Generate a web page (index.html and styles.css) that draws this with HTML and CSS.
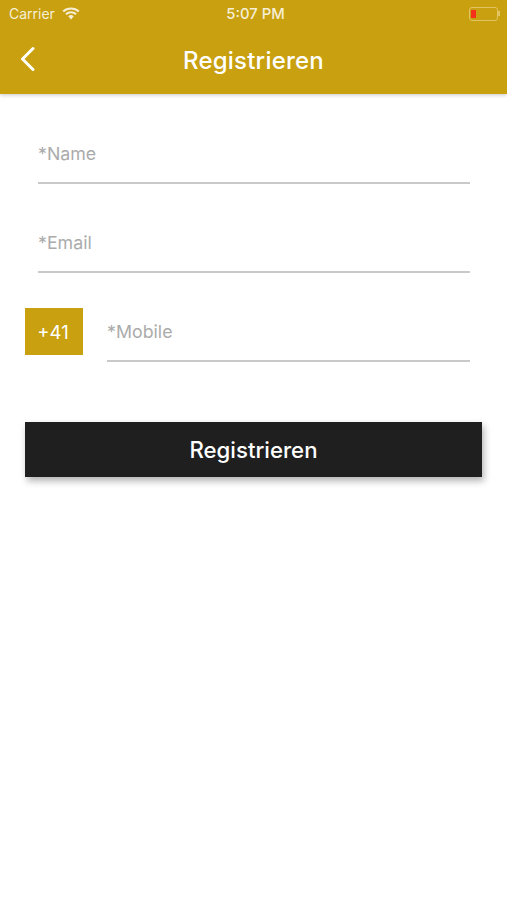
FILE: index.html
```html
<!DOCTYPE html>
<html lang="de">
<head>
<meta charset="utf-8">
<title>Registrieren</title>
<link rel="stylesheet" href="styles.css">
</head>
<body>
<header class="appbar">
  <div class="status">
    <div class="status-left">
      <span>Carrier</span>
      <svg class="wifi" width="18" height="13" viewBox="0 0 18 13"><path d="M9 12.6 6.2 9.3a4.3 4.3 0 0 1 5.6 0z" fill="#f6efd6"/><path d="M1.2 4.6a11.6 11.6 0 0 1 15.6 0M3.9 7.2a7.6 7.6 0 0 1 10.2 0" fill="none" stroke="#f6efd6" stroke-width="2"/></svg>
    </div>
    <div class="status-time">5:07 PM</div>
    <div class="status-right">
      <div class="battery"><div class="battery-level"></div></div>
      <div class="battery-cap"></div>
    </div>
  </div>
  <div class="nav">
    <svg class="back" width="16" height="26" viewBox="0 0 16 26"><path d="M14 2.5 3.5 13 14 23.5" fill="none" stroke="#fff" stroke-width="3" stroke-linecap="round" stroke-linejoin="round"/></svg>
    <h1 class="title">Registrieren</h1>
  </div>
</header>
<main class="form">
  <div class="field"><span class="placeholder">*Name</span></div>
  <div class="field"><span class="placeholder">*Email</span></div>
  <div class="phone-row">
    <div class="code">+41</div>
    <div class="field field-phone"><span class="placeholder">*Mobile</span></div>
  </div>
  <button class="submit" type="button">Registrieren</button>
</main>
</body>
</html>
```
FILE: styles.css
```css
* { box-sizing: border-box; }
html, body { margin: 0; padding: 0; }
body {
  width: 507px;
  height: 900px;
  background: #fff;
  font-family: Inter, Roboto, sans-serif;
  overflow: hidden;
}
.appbar {
  height: 94px;
  background: #c9a00f;
  box-shadow: 0 1px 4px rgba(0,0,0,.22);
  color: #fff;
}
.status {
  height: 27px;
  padding: 0 7px 0 9px;
  display: grid;
  grid-template-columns: 1fr auto 1fr;
  align-items: center;
  font-size: 14px;
  color: #f6efd6;
}
.status-left { display: flex; align-items: center; gap: 7px; }
.wifi { margin-top: -1px; }
.status-time { font-size: 14.8px; font-weight: 500; padding-left: 2px; }
.status-right { display: flex; justify-content: flex-end; align-items: center; }
.battery {
  width: 29px;
  height: 14px;
  border: 1px solid #e3c463;
  border-radius: 3px;
  padding: 2px 1px;
}
.battery-level { width: 5px; height: 100%; background: #f5301a; }
.battery-cap { width: 2px; height: 5px; background: #e3c463; }
.nav {
  height: 67px;
  display: flex;
  align-items: center;
  justify-content: center;
  position: relative;
}
.back { position: absolute; left: 19px; top: 19px; }
.title { margin: 0; font-size: 24px; font-weight: 500; letter-spacing: .2px; }
.form {
  padding: 0 25px;
  display: flex;
  flex-direction: column;
}
.field {
  margin: 30px 12px 0 13px;
  height: 60px;
  border-bottom: 2px solid #c9c9c9;
  display: flex;
  align-items: center;
}
.field + .field { margin-top: 29px; }
.placeholder { font-size: 17.8px; color: #ababab; }
.phone-row { display: flex; align-items: flex-start; margin-top: 35px; }
.code {
  width: 58px;
  height: 47px;
  padding-right: 2px;
  background: #c9a00f;
  color: #fff;
  font-size: 18.5px;
  display: flex;
  align-items: center;
  justify-content: center;
}
.field-phone { margin: -6px 12px 0 24px; flex: 1; }
.submit {
  margin-top: 60px;
  width: 457px;
  height: 55px;
  border: 0;
  background: #1f1f1f;
  color: #fff;
  font: 500 22.2px Inter, Roboto, sans-serif;
  box-shadow: 2px 4px 7px rgba(0,0,0,.3);
}
```
